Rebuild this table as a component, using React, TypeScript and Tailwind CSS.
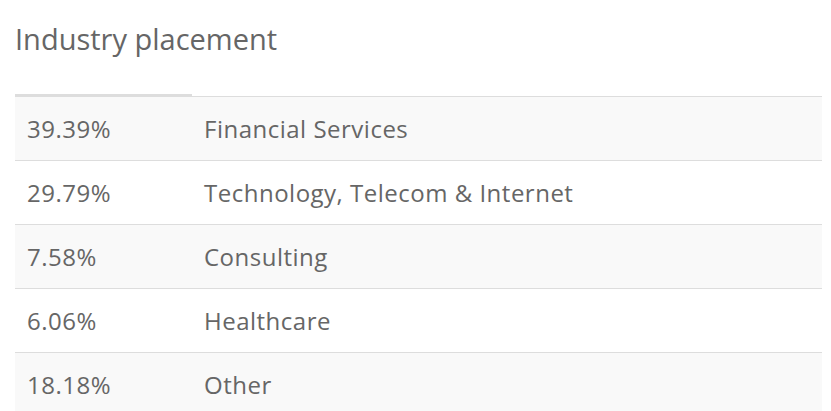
import React from "react";

const rows: [string, string][] = [
  ["39.39%", "Financial Services"],
  ["29.79%", "Technology, Telecom & Internet"],
  ["7.58%", "Consulting"],
  ["6.06%", "Healthcare"],
  ["18.18%", "Other"],
];

export default function App() {
  return (
    <div className="w-[831px] h-[411px] overflow-hidden bg-white px-[15px] pt-[19px] text-[#666666]" style={{ fontFamily: "'Open Sans', sans-serif" }}>
      <h2 className="text-[29px] leading-[40px] m-0 font-normal text-[#666666]">Industry placement</h2>
      <div className="mt-[35px] w-[807px]">
        <div className="flex h-[3px]">
          <div className="w-[177px] bg-[#dddddd]" />
          <div className="flex-1 flex flex-col justify-end"><div className="h-[1px] bg-[#dddddd]" /></div>
        </div>
        {rows.map(([p, n], i) => (
          <div key={i} className={`flex items-center h-[64px] border-b border-[#dddddd] text-[24px] tracking-[0.5px] ${i % 2 === 0 ? "bg-[#f9f9f9]" : "bg-white"}`}>
            <div className="w-[177px] pl-[12px]">{p}</div>
            <div className="pl-[12px]">{n}</div>
          </div>
        ))}
      </div>
    </div>
  );
}
